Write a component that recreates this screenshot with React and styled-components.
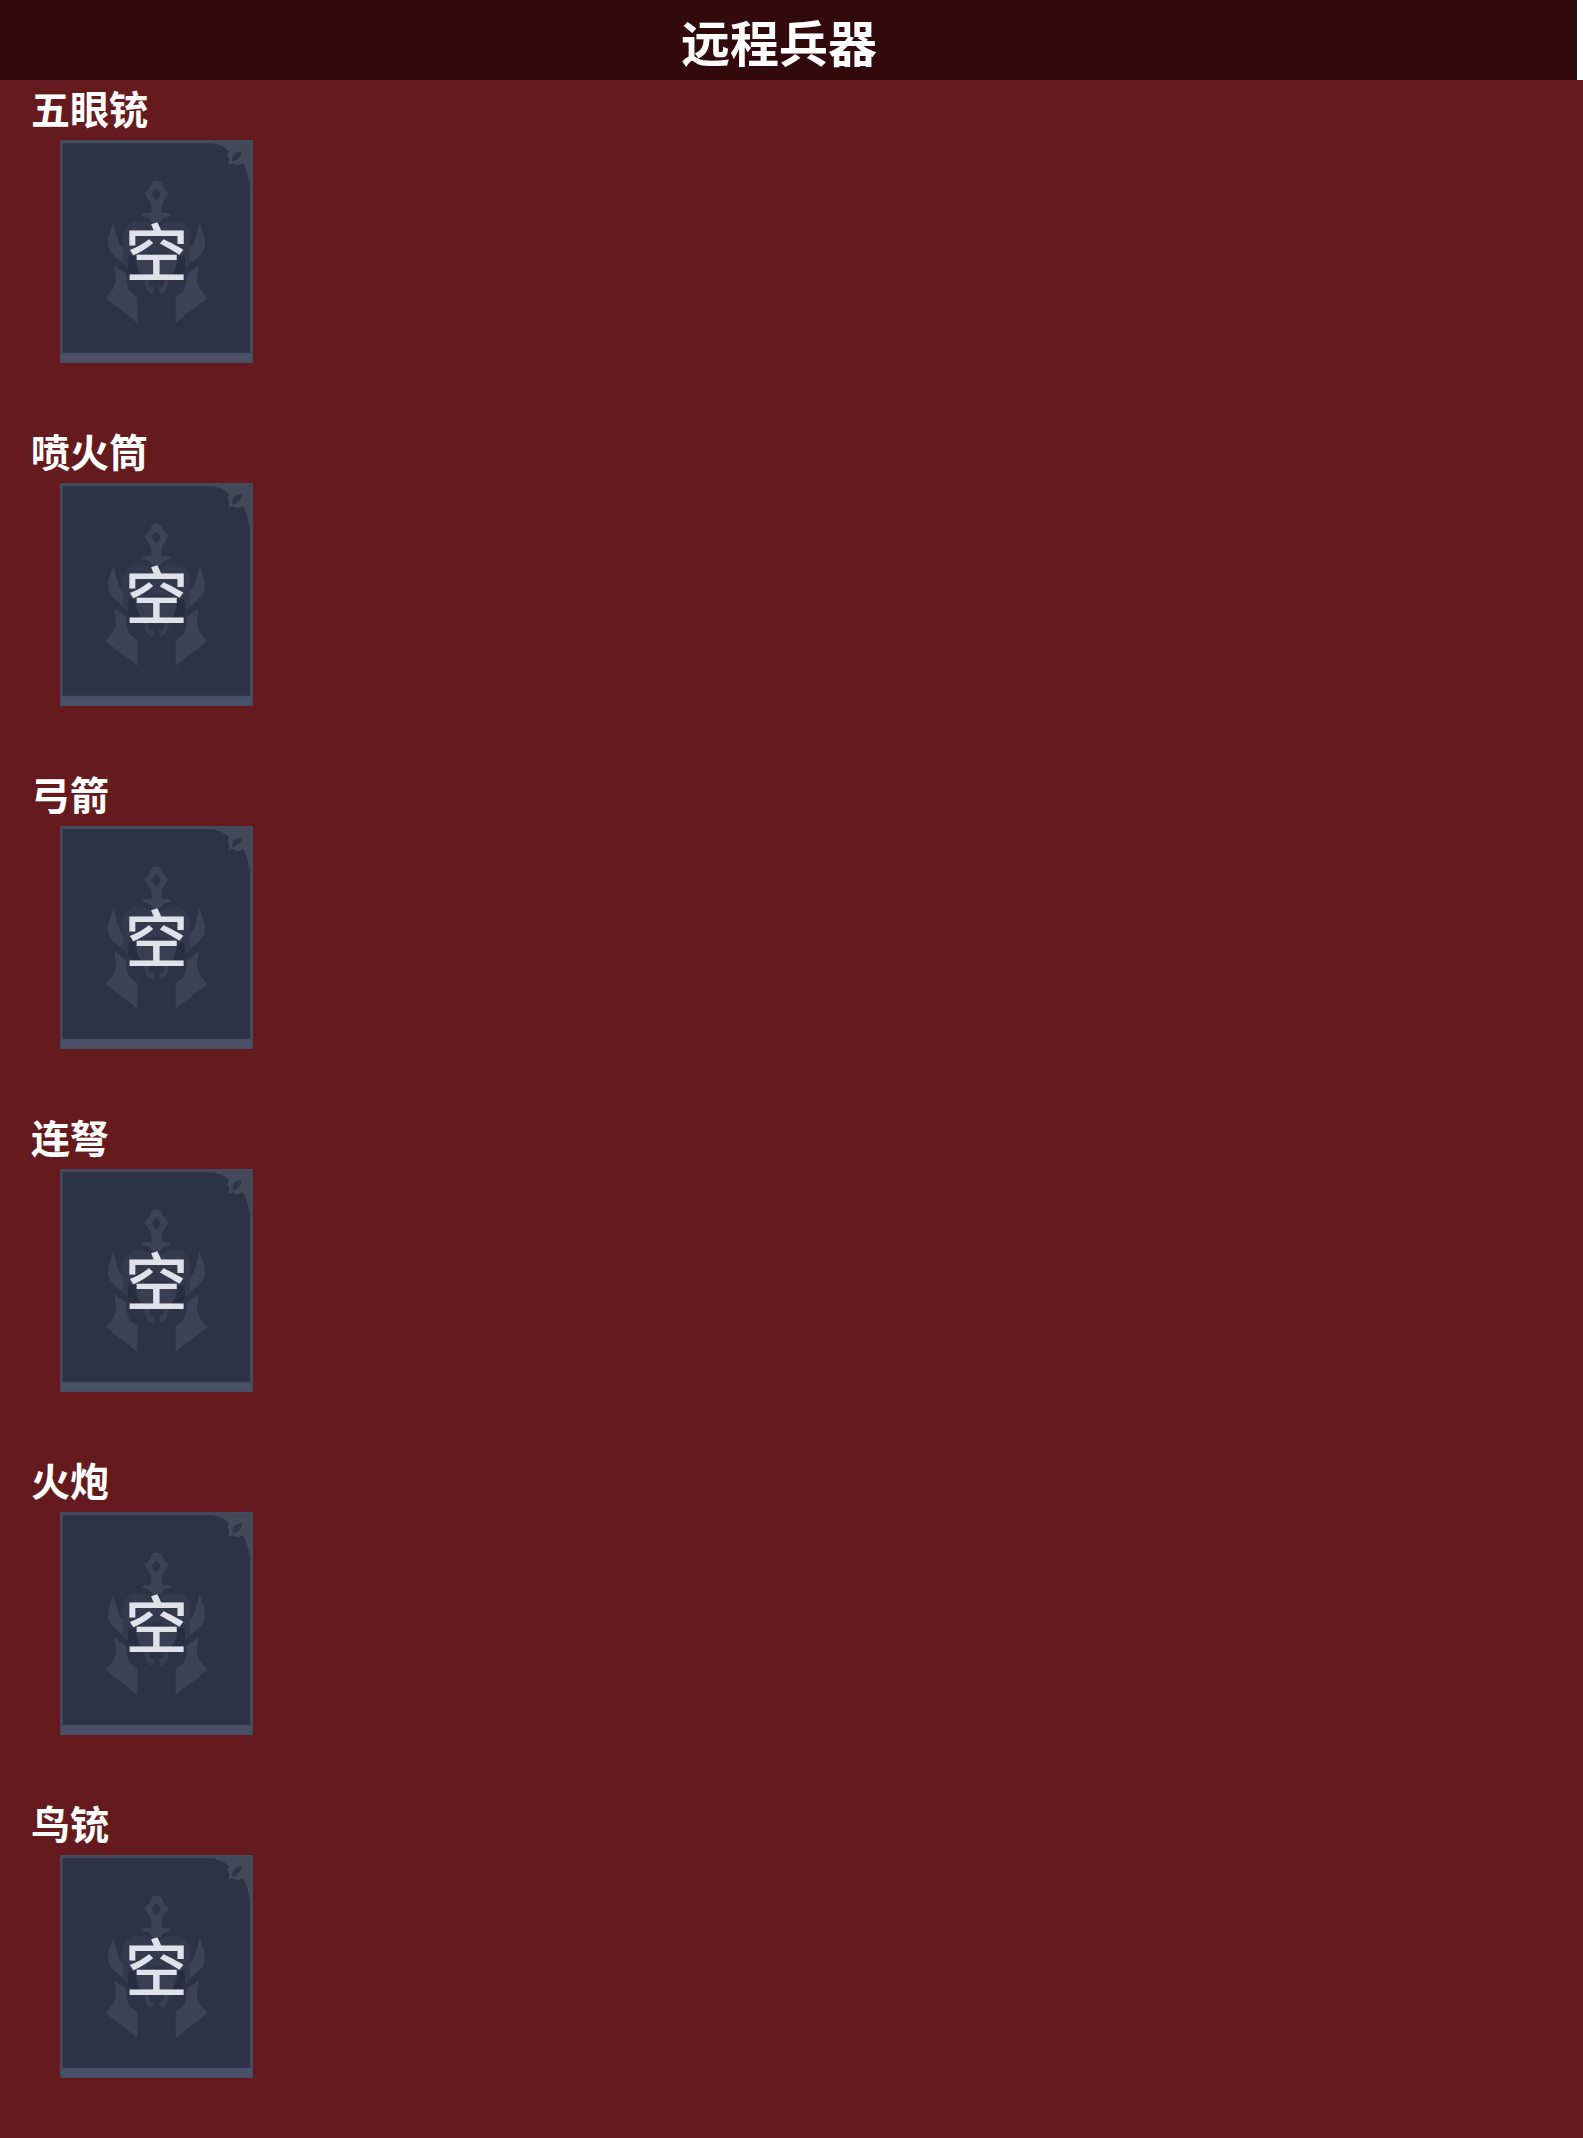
import React from 'react'
import styled, { createGlobalStyle } from 'styled-components'

const GlobalStyle = createGlobalStyle`
  * {
    box-sizing: border-box;
  }

  body {
    margin: 0;
    background: #ffffff;
    font-family: "Noto Sans CJK SC", "Noto Sans", sans-serif;
  }
`

const Page = styled.div`
  display: flex;
  flex-direction: column;
`

const Header = styled.header`
  display: flex;
  align-items: center;
  justify-content: center;
  height: 80px;
  margin-right: 6px;
  padding: 2px 18px 0 0;
  background: #320a0c;
  border-right: 1px solid #23100f;
`

const Title = styled.h1`
  margin: 0;
  color: #ffffff;
  font-size: 49px;
  font-weight: 700;
  line-height: 72px;
`

const WeaponList = styled.main`
  background: #651a1d;
`

const WeaponGroup = styled.section`
  padding: 0 60px 60px;
`

const WeaponName = styled.h2`
  margin: 0 0 0 -29px;
  padding-bottom: 6px;
  color: #ffffff;
  font-size: 39px;
  font-weight: 700;
  line-height: 54px;
`

const Slot = styled.div`
  display: grid;
  width: 193px;
  height: 223px;
  background: #2d3246;

  > * {
    grid-area: 1 / 1;
  }
`

const SlotArt = styled.svg`
  display: block;
  width: 100%;
  height: 100%;
`

const SlotText = styled.span`
  place-self: center;
  padding-bottom: 6px;
  color: #e0e1e9;
  font-size: 63px;
  font-weight: 500;
  line-height: 64px;
`

const weapons = ['五眼铳', '喷火筒', '弓箭', '连弩', '火炮', '鸟铳']

// Left half of the helmet, mirrored for the right half
function HelmetHalf() {
  return (
    <>
      <path fill="#3d4256" d="M160 247 C154 273 140 290 145 322 C151 346 188 365 210 391 L218 352 L190 322 C173 315 170 280 160 247Z" />
      <path fill="#3d4256" d="M164 374 C174 388 192 392 198 402 C201 424 200 436 209 454 L232 472 L232 549 C205 524 171 504 137 474 C155 454 167 438 168 421 C168 403 162 389 164 374Z" />
      <path fill="#34394d" d="M188 365 C194 344 188 324 187 296 C188 266 204 243 231 243 L263 247 L290 267 L290 330 L214 352 L210 388Z" />
      <path fill="#393e52" d="M228 358 L290 358 L290 419 L268 419 C264 434 270 442 282 440 L279 462 C260 458 256 444 252 420 L238 407Z" />
      <path fill="#282d40" d="M205 347 L222 350 L228 380 L243 403 L218 403 L204 387Z" />
    </>
  )
}

function EmptySlot() {
  return (
    <Slot>
      <SlotArt viewBox="0 0 579 669" aria-hidden="true">
        {/* frame */}
        <path fill="#454a5f" fillRule="evenodd" d="M0 0H579V669H0Z M8 10V638H570V10Z" />
        <path fill="#4a5067" d="M3 641H575V667H3Z" />
        {/* corner ornament */}
        <path fill="#43485b" d="M450 8 C474 12 492 18 507 34 L502 46 L508 56 L505 75 L518 70 L532 76 L549 70 C560 90 566 108 570 142 L576 140 V4 H450Z" />
        <path fill="#2f3448" d="M518 65 C514 44 526 35 546 34 C544 50 536 59 518 65Z" />
        {/* sword */}
        <path fill="#3d4256" fillRule="evenodd" d="M289 121 C301 121 307 132 311 144 L326 159 C318 176 308 182 306 195 L304 215 C313 222 322 214 335 225 C320 232 306 232 303 246 H276 C273 232 259 232 244 225 C257 214 266 222 275 215 L273 195 C271 182 261 176 253 159 L268 144 C272 132 278 121 289 121Z M289 144 C285 152 277 155 277 163 C277 171 284 175 289 182 C294 175 301 171 301 163 C301 155 293 152 289 144Z" />
        <HelmetHalf />
        <g transform="matrix(-1 0 0 1 579 0)">
          <HelmetHalf />
        </g>
      </SlotArt>
      <SlotText>空</SlotText>
    </Slot>
  )
}

export default function App() {
  return (
    <Page>
      <GlobalStyle />
      <Header>
        <Title>远程兵器</Title>
      </Header>
      <WeaponList>
        {weapons.map((name) => (
          <WeaponGroup key={name}>
            <WeaponName>{name}</WeaponName>
            <EmptySlot />
          </WeaponGroup>
        ))}
      </WeaponList>
    </Page>
  )
}
